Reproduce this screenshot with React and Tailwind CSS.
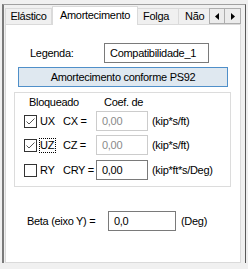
import React from "react";

function Check({ checked }) {
  return (
    <svg width="13" height="13" viewBox="0 0 13 13" className="block shrink-0">
      <rect x="0.5" y="0.5" width="12" height="12" fill="white" stroke="#333333" />
      {checked && (
        <path d="M2.5 6.5 L5 9 L10.5 3.5" fill="none" stroke="#555555" strokeWidth="1" />
      )}
    </svg>
  );
}

function Row({ checked, axis, focus, coef, value, enabled, unit }) {
  return (
    <div className="flex items-center h-[20px] pl-[9px]">
      <div className="flex items-center w-[39px]">
        <Check checked={checked} />
        <span
          className={
            "leading-[13px] " +
            (focus ? "ml-[2px] border border-dotted border-black pr-px" : "ml-[3px]")
          }
        >
          {axis}
        </span>
      </div>
      <div className="w-[33px] whitespace-nowrap">{coef}</div>
      <div
        className={
          "w-[52px] h-[20px] bg-white flex items-center pl-[5px] border " +
          (enabled ? "border-[#7a7a7a] text-black" : "border-[#cccccc] text-[#8a8a8a]")
        }
      >
        {value}
      </div>
      <div className="ml-[4px] whitespace-nowrap">{unit}</div>
    </div>
  );
}

export default function App() {
  return (
    <div className="w-[248px] h-[269px] bg-[#f0f0f0] pt-[4px] pl-[2px] overflow-hidden font-['Liberation_Sans',Arial,sans-serif] text-[11px] leading-[13px] tracking-[-0.3px] text-black">
      <div className="relative w-[244px] h-[259px] border-t border-t-[#a0a0a0] border-l-2 border-l-[#7a7a7a] border-r border-r-[#5a5a5a]">
        {/* tab strip */}
        <div className="flex items-end h-[19px] pl-px">
          <div className="w-[47px] h-[16px] border border-b-0 border-[#dadada] bg-[#f0f0f0] flex items-center justify-center">
            Elástico
          </div>
          <div className="relative z-10 -mb-px w-[86px] h-[19px] border border-b-0 border-[#dadada] bg-white flex items-start justify-center pt-[2px]">
            Amortecimento
          </div>
          <div className="w-[41px] h-[16px] border border-b-0 border-l-0 border-[#dadada] bg-[#f0f0f0] flex items-center pl-[5px]">
            Folga
          </div>
          <div className="w-[40px] h-[16px] border border-b-0 border-l-0 border-[#dadada] bg-[#f0f0f0] flex items-center pl-[6px] whitespace-nowrap">
            Não
          </div>
        </div>
        {/* scroll buttons */}
        <div className="absolute left-[205px] top-[3px] flex">
          <div className="w-[16px] h-[16px] border border-[#adadad] bg-[#ececec] flex items-center justify-center">
            <svg width="4" height="7" viewBox="0 0 4 7">
              <path d="M4 0 L0 3.5 L4 7 Z" fill="#000" />
            </svg>
          </div>
          <div className="w-[16px] h-[16px] border border-l-0 border-[#adadad] bg-[#ececec] flex items-center justify-center">
            <svg width="4" height="7" viewBox="0 0 4 7">
              <path d="M0 0 L4 3.5 L0 7 Z" fill="#000" />
            </svg>
          </div>
        </div>
        {/* panel */}
        <div className="ml-px w-[236px] h-[239px] border border-[#dadada] bg-white flex flex-col">
          <div className="mt-[18px] flex items-center h-[20px] pl-[24px]">
            <div className="w-[74px]">Legenda:</div>
            <div className="w-[105px] h-[20px] border border-[#7a7a7a] flex items-center pl-[5px]">
              Compatibilidade_1
            </div>
          </div>
          <div className="mt-[4px] ml-[12px] w-[210px] h-[20px] border border-[#4f8fc9] bg-[#dfe8f0] flex items-center justify-center">
            Amortecimento conforme PS92
          </div>
          <div className="mt-[5px] ml-[8px] w-[217px] h-[95px] border border-[#dcdcdc] flex flex-col">
            <div className="mt-[3px] flex h-[13px] pl-[14px]">
              <div className="w-[75px]">Bloqueado</div>
              <div>Coef. de</div>
            </div>
            <div className="mt-[2px]">
              <Row checked axis="UX" coef="CX =" value="0,00" unit="(kip*s/ft)" />
            </div>
            <div className="mt-[4px]">
              <Row checked axis="UZ" focus coef="CZ =" value="0,00" unit="(kip*s/ft)" />
            </div>
            <div className="mt-[5px]">
              <Row axis="RY" coef="CRY =" value="0,00" enabled unit="(kip*ft*s/Deg)" />
            </div>
          </div>
          <div className="mt-[24px] flex items-center h-[20px] pl-[21px]">
            <div className="w-[81px] whitespace-nowrap">Beta (eixo Y) =</div>
            <div className="w-[68px] h-[20px] border border-[#7a7a7a] flex items-center pl-[5px]">
              0,0
            </div>
            <div className="ml-[5px]">(Deg)</div>
          </div>
        </div>
      </div>
    </div>
  );
}
